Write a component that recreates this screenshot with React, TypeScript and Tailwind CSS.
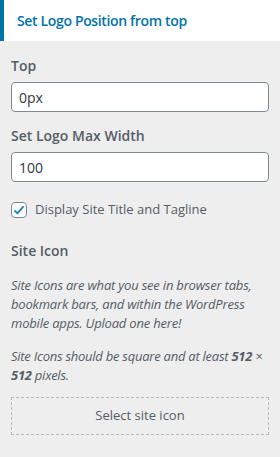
export default function App() {
  return (
    <div
      className="w-[280px] h-[457px] bg-[#eeeeee] text-[#555d66] overflow-hidden"
      style={{ fontFamily: '"Open Sans", "Noto Sans", sans-serif' }}
    >
      {/* section header */}
      <div className="h-[41px] bg-white border-l-4 border-[#0073aa] pl-[13px] flex items-center">
        <h2 className="text-[14px] font-semibold text-[#0073aa] tracking-[-0.35px]">
          Set Logo Position from top
        </h2>
      </div>

      <div className="px-[11px] pt-[14px]">
        <label className="block text-[14px] font-semibold text-[#555d66] leading-[22px]">Top</label>
        <input
          type="text"
          defaultValue="0px"
          className="mt-[5px] block w-[258px] h-[30px] rounded-[4px] border border-[#7e8993] bg-white px-[7px] text-[14px] text-[#32373c] outline-none"
        />

        <label className="mt-[13px] block text-[14px] font-semibold text-[#555d66] leading-[22px]">
          Set Logo Max Width
        </label>
        <input
          type="text"
          defaultValue="100"
          className="mt-[5px] block w-[258px] h-[30px] rounded-[4px] border border-[#7e8993] bg-white px-[7px] text-[14px] text-[#32373c] outline-none"
        />

        <label className="mt-[18px] flex items-center gap-[8px] text-[13px] text-[#555d66]">
          <span className="w-[16px] h-[16px] rounded-[4px] border border-[#7e8993] bg-white flex items-center justify-center">
            <svg width="16" height="16" viewBox="0 0 20 20">
              <path d="M3.5 10.5l4.2 4.2L16.5 4.8" fill="none" stroke="#1e8cbe" strokeWidth="2.8" strokeLinejoin="round" />
            </svg>
          </span>
          Display Site Title and Tagline
        </label>

        <div className="mt-[20px] text-[14px] font-semibold leading-[22px]">Site Icon</div>
        <p className="mt-[14px] text-[13px] italic leading-[19px] tracking-[-0.2px]">
          Site Icons are what you see in browser tabs, bookmark bars, and within the WordPress mobile apps. Upload one
          here!
        </p>
        <p className="mt-[14px] text-[13px] italic leading-[19px] tracking-[-0.25px]">
          Site Icons should be square and at least <strong>512</strong> × <strong>512</strong> pixels.
        </p>

        <button
          type="button"
          className="mt-[12px] block w-[258px] h-[38px] border border-dashed border-[#b4b9be] text-[13px] text-[#555d66]"
        >
          Select site icon
        </button>
      </div>
    </div>
  )
}
